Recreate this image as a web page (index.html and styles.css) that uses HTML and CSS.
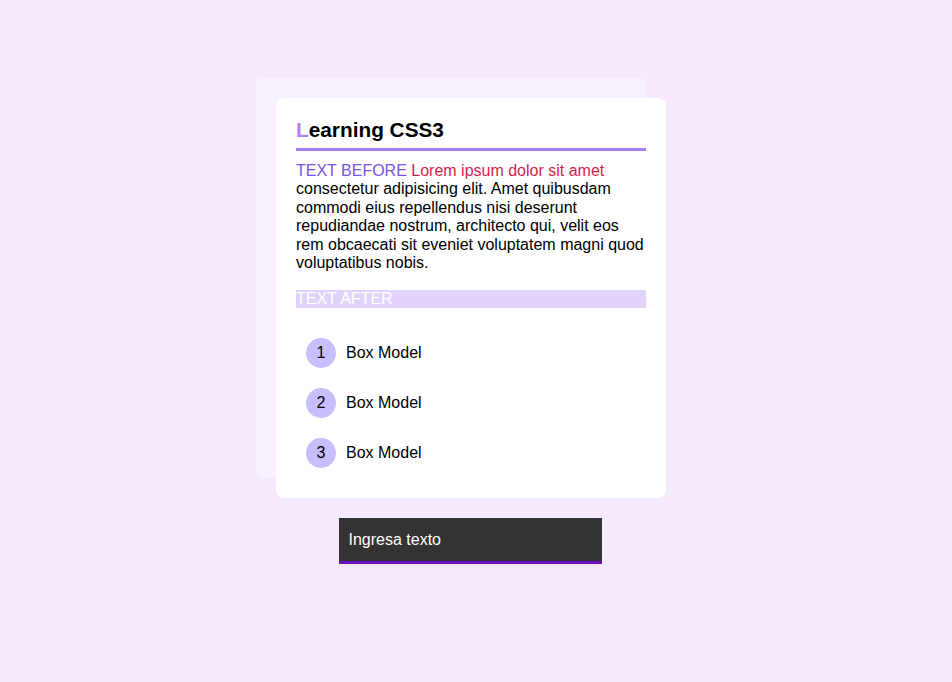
FILE: index.html
```html
<!DOCTYPE html>
<html lang="es">
<head>
<meta charset="utf-8">
<title>Learning CSS3</title>
<link rel="stylesheet" href="styles.css">
</head>
<body>
<main class="page">
  <section class="card">
    <h2 class="card-title">Learning CSS3</h2>
    <p class="card-text"><span class="before">TEXT BEFORE</span> <span class="lead">Lorem ipsum dolor sit amet</span> consectetur adipisicing elit. Amet quibusdam commodi eius repellendus nisi deserunt repudiandae nostrum, architecto qui, velit eos rem obcaecati sit eveniet voluptatem magni quod voluptatibus nobis.</p>
    <div class="after">TEXT AFTER</div>
    <ol class="steps">
      <li class="step"><span class="num">1</span><span>Box Model</span></li>
      <li class="step"><span class="num">2</span><span>Box Model</span></li>
      <li class="step"><span class="num">3</span><span>Box Model</span></li>
    </ol>
  </section>
  <input class="field" type="text" placeholder="Ingresa texto">
</main>
</body>
</html>
```

FILE: styles.css
```css
html, body {
  margin: 0;
  padding: 0;
  background: #f5e9fe;
  font-family: "Liberation Sans", Arial, sans-serif;
  font-size: 16px;
}

.page {
  display: flex;
  flex-direction: column;
  align-items: center;
  gap: 20px;
  padding: 98px 10px 0 0;
}

.card {
  width: 350px;
  height: 360px;
  padding: 20px 20px 20px 20px;
  background: #ffffff;
  border-radius: 8px;
  box-shadow: -20px -20px 0 #f9f2fe;
}

.card-title {
  margin: 0;
  padding-bottom: 6px;
  font-size: 20.8px;
  font-weight: bold;
  color: #000;
  border-bottom: 3px solid #a47cf3;
}

.card-title::first-letter {
  color: #b580f8;
}

.card-text {
  margin: 11px 0 0;
  color: #000;
  line-height: 18.4px;
}

.before {
  color: #7a54df;
}

.lead {
  color: #d61c4e;
}

.after {
  margin-top: 18px;
  height: 18px;
  line-height: 18px;
  background: #e2d3fd;
  color: #ffffff;
}

.steps {
  list-style: none;
  margin: 30px 0 0;
  padding: 0 0 0 10px;
  display: flex;
  flex-direction: column;
  gap: 20px;
}

.step {
  display: flex;
  align-items: center;
  gap: 10px;
  height: 30px;
}

.num {
  width: 30px;
  height: 30px;
  border-radius: 50%;
  background: #c8bdfd;
  display: flex;
  align-items: center;
  justify-content: center;
}

.field {
  box-sizing: border-box;
  width: 263px;
  height: 46px;
  margin-right: 2px;
  padding: 0 10px;
  border: none;
  border-bottom: 3px solid #6a0dba;
  background: #333333;
  color: #ffffff;
  font-family: "Liberation Sans", Arial, sans-serif;
  font-size: 16px;
  outline: none;
}

.field::placeholder {
  color: #ffffff;
  opacity: 1;
}
```
